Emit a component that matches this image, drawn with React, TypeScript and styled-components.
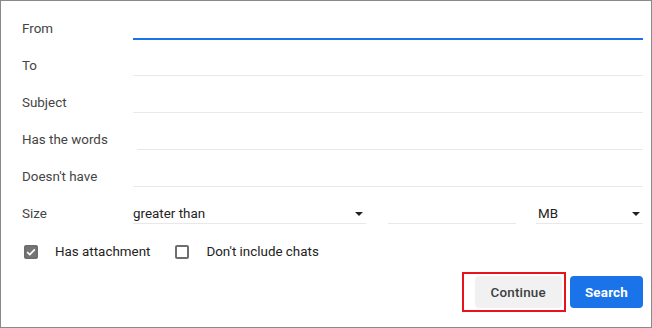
import React from 'react';
import styled, { createGlobalStyle } from 'styled-components';

const GlobalStyle = createGlobalStyle`
  html, body {
    margin: 0;
    padding: 0;
    background: #fff;
  }
  * {
    box-sizing: border-box;
  }
`;

const Panel = styled.div`
  width: 652px;
  height: 328px;
  border: 1px solid #8a8a8a;
  padding: 2px 8px 0 21px;
  font-family: Roboto, 'Liberation Sans', Arial, sans-serif;
  font-size: 13.4px;
  background: #fff;
`;

const Row = styled.div`
  display: grid;
  grid-template-columns: 111px 1fr;
  height: 37px;
  align-items: end;
`;

const Label = styled.div`
  color: #444;
  line-height: 16px;
  margin-bottom: 3px;
`;

const Field = styled.div<{ $active?: boolean; $indent?: number }>`
  height: 24px;
  margin-left: ${(p) => p.$indent || 0}px;
  border-bottom: ${(p) => (p.$active ? '2px solid #1a73e8' : '1px solid #e8e8e8')};
  margin-bottom: ${(p) => (p.$active ? '0' : '1px')};
`;

const SizeFields = styled.div`
  display: flex;
  align-items: flex-end;
  height: 24px;
  margin-bottom: 1px;
`;

const Select = styled.div<{ $width: number }>`
  width: ${(p) => p.$width}px;
  height: 24px;
  display: flex;
  align-items: flex-end;
  justify-content: space-between;
  border-bottom: 1px solid #e8e8e8;
  color: #222;
  line-height: 16px;
  padding: 0 3px 1px 0;
`;

const NumberBox = styled.div`
  width: 128px;
  height: 24px;
  margin: 0 20px 0 22px;
  border-bottom: 1px solid #e8e8e8;
`;

const Arrow = styled.span`
  width: 0;
  height: 0;
  border-left: 4px solid transparent;
  border-right: 4px solid transparent;
  border-top: 4px solid #222;
  margin-bottom: 6px;
`;

const CheckRow = styled.div`
  display: flex;
  align-items: center;
  gap: 25px;
  padding: 19px 0 0 2px;
  height: 35px;
`;

const CheckItem = styled.label`
  display: flex;
  align-items: center;
  gap: 17px;
  color: #222;
  line-height: 16px;
`;

const Box = styled.span<{ $checked?: boolean }>`
  width: 14px;
  height: 14px;
  border-radius: 2px;
  border: 2px solid #6e6e6e;
  background: ${(p) => (p.$checked ? '#757575' : '#fff')};
  display: flex;
  align-items: center;
  justify-content: center;
`;

const Actions = styled.div`
  display: flex;
  justify-content: flex-end;
  gap: 8px;
  margin-top: 16px;
`;

const Highlight = styled.div`
  position: relative;
  &::after {
    content: '';
    position: absolute;
    left: -13px;
    top: -4px;
    right: -4px;
    bottom: -4px;
    border: 2px solid #e8141c;
    pointer-events: none;
  }
`;

const Button = styled.button<{ $primary?: boolean }>`
  height: 32px;
  border: none;
  border-radius: 4px;
  font-family: Roboto, 'Liberation Sans', Arial, sans-serif;
  font-size: 13.4px;
  font-weight: ${(p) => (p.$primary ? 700 : 500)};
  letter-spacing: 0.2px;
  padding: 0 ${(p) => (p.$primary ? 15 : 16)}px;
  background: ${(p) => (p.$primary ? '#1a73e8' : '#f1f1f1')};
  color: ${(p) => (p.$primary ? '#fff' : '#3c4043')};
  cursor: pointer;
`;

const fields = [
  { label: 'From', active: true },
  { label: 'To' },
  { label: 'Subject' },
  { label: 'Has the words', indent: 4 },
  { label: "Doesn't have" },
];

const Check = () => (
  <svg width="10" height="10" viewBox="0 0 10 10">
    <path d="M1.2 5.2 L3.8 7.6 L8.8 2.4" fill="none" stroke="#fff" strokeWidth="1.6" />
  </svg>
);

export default function App() {
  return (
    <>
      <GlobalStyle />
      <Panel>
        {fields.map((f) => (
          <Row key={f.label}>
            <Label>{f.label}</Label>
            <Field $active={f.active} $indent={f.indent} />
          </Row>
        ))}
        <Row>
          <Label>Size</Label>
          <SizeFields>
            <Select $width={233}>
              greater than
              <Arrow />
            </Select>
            <NumberBox />
            <Select $width={107} style={{ paddingLeft: 2 }}>
              MB
              <Arrow />
            </Select>
          </SizeFields>
        </Row>
        <CheckRow>
          <CheckItem>
            <Box $checked>
              <Check />
            </Box>
            Has attachment
          </CheckItem>
          <CheckItem>
            <Box />
            Don't include chats
          </CheckItem>
        </CheckRow>
        <Actions>
          <Highlight>
            <Button>Continue</Button>
          </Highlight>
          <Button $primary>Search</Button>
        </Actions>
      </Panel>
    </>
  );
}
